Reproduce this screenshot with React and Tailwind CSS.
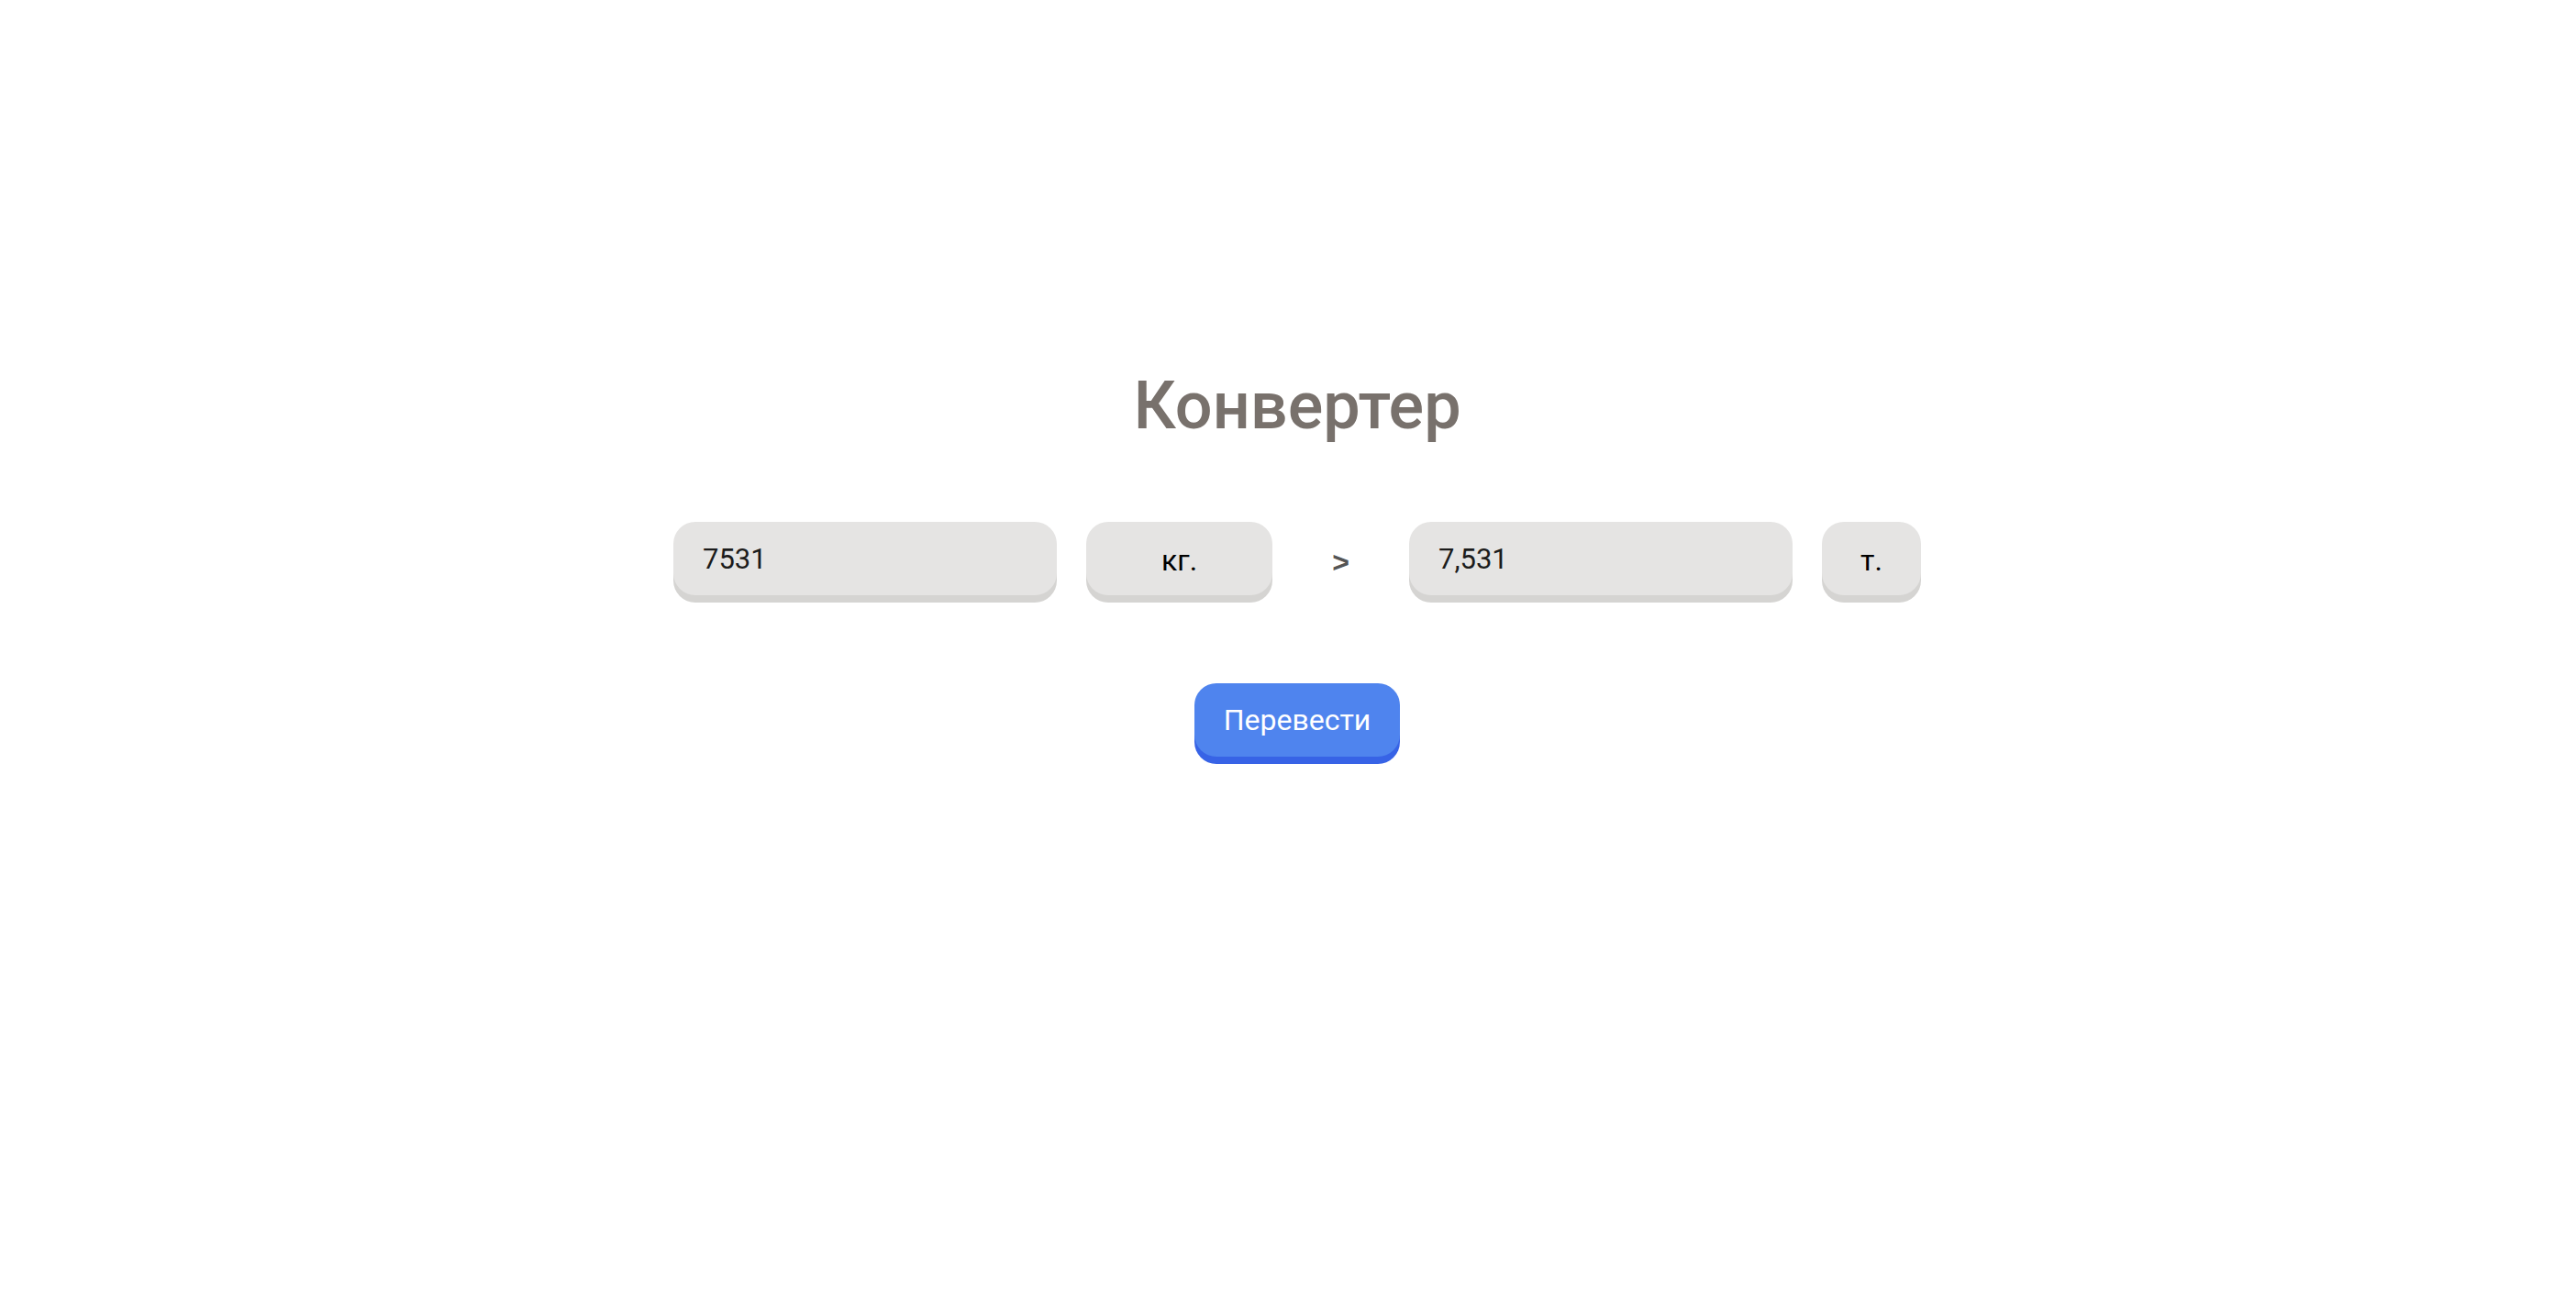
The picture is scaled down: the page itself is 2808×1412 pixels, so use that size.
import { useState } from "react";

const font = { fontFamily: 'Roboto, "Liberation Sans", Arial, sans-serif' };

function Field({ value, onChange }) {
  return (
    <input
      value={value}
      onChange={(e) => onChange && onChange(e.target.value)}
      readOnly={!onChange}
      className="h-[80px] w-[418px] rounded-[24px] bg-[#e5e4e3] px-8 text-[31px] text-[#1c1c1c] shadow-[0_8px_0_#d5d4d2] outline-none"
    />
  );
}

function Unit({ label, width }) {
  return (
    <button className={`${width} h-[80px] rounded-[24px] bg-[#e5e4e3] pt-1 text-[32px] text-black shadow-[0_8px_0_#d5d4d2]`}>
      {label}
    </button>
  );
}

export default function App() {
  const [kg, setKg] = useState("7531");
  const [tons, setTons] = useState("7,531");

  const convert = () => {
    const n = parseFloat(kg.replace(",", "."));
    if (!isNaN(n)) setTons(String(n / 1000).replace(".", ","));
  };

  return (
    <div style={font} className="min-h-screen w-full bg-white pl-5 pt-[407px]">
      <div className="flex flex-col items-center">
        <h1 className="text-[72px] font-medium leading-[72px] text-[#78716c]">Конвертер</h1>

        <div className="mt-[90px] flex items-center gap-8">
          <Field value={kg} onChange={setKg} />
          <Unit label="кг." width="w-[203px]" />
          <span className="w-[85px] pt-2 text-center font-['Liberation_Sans',Arial,sans-serif] text-[32px] font-bold text-[#555]">&gt;</span>
          <Field value={tons} />
          <Unit label="т." width="w-[108px]" />
        </div>

        <button
          onClick={convert}
          className="mt-[96px] h-[80px] rounded-[24px] bg-[#4f84ee] px-8 text-[32px] text-white shadow-[0_8px_0_#3763e6]"
        >
          Перевести
        </button>
      </div>
    </div>
  );
}
